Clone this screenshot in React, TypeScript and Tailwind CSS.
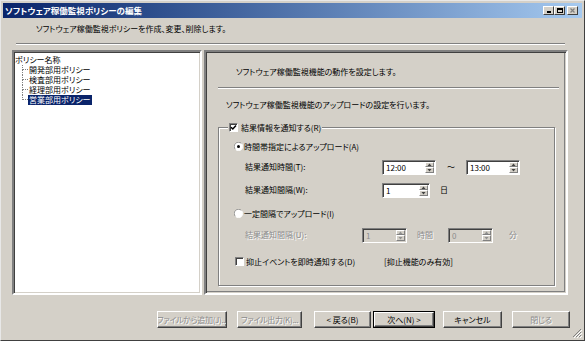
import React from 'react';

const Check = ({ checked }: { checked?: boolean }) => (
  <span className="inline-flex w-[9px] h-[9px] shrink-0 items-center justify-center bg-white border border-t-[#808080] border-l-[#808080] border-b-white border-r-white shadow-[inset_1px_1px_0_#404040]">
    {checked && (
      <svg width="7" height="7" viewBox="0 0 7 7">
        <path d="M1 3.2 L2.8 5 L6 1.4" stroke="#000" strokeWidth="1.5" fill="none" />
      </svg>
    )}
  </span>
);

const Radio = ({ checked }: { checked?: boolean }) => (
  <svg width="9" height="9" viewBox="0 0 12 12" className="shrink-0">
    <circle cx="6" cy="6" r="5.5" fill="#fff" />
    <path d="M10 2 A5.5 5.5 0 0 0 2 10" stroke="#808080" strokeWidth="1" fill="none" />
    <path d="M2 10 A5.5 5.5 0 0 0 10 2" stroke="#fff" strokeWidth="1" fill="none" />
    {checked && <circle cx="6" cy="6" r="2" fill="#000" />}
  </svg>
);

const Arrow = ({ up, disabled }: { up?: boolean; disabled?: boolean }) => (
  <div className="flex-1 flex items-center justify-center bg-[#d4d0c8] border-t border-l border-t-white border-l-white border-b border-r border-b-[#808080] border-r-[#808080]">
    <svg width="5" height="3" viewBox="0 0 5 3">
      <path d={up ? 'M0.5 3 L2.5 0.5 L4.5 3 Z' : 'M0.5 0 L4.5 0 L2.5 2.5 Z'} fill={disabled ? '#909090' : '#404040'} />
    </svg>
  </div>
);

const Spin = ({ value, className, disabled }: { value: string; className: string; disabled?: boolean }) => (
  <div
    className={`flex h-[15px] border border-t-[#808080] border-l-[#808080] border-b-white border-r-white shadow-[inset_1px_1px_0_#404040] ${
      disabled ? 'bg-[#d4d0c8] text-[#8c8c8c]' : 'bg-white text-black'
    } ${className}`}
  >
    <div className="flex-1 pl-[3px] pt-[2px] leading-[10px]">{value}</div>
    <div className="flex flex-col w-[10px] py-[1px] pr-[1px]">
      <Arrow up disabled={disabled} />
      <Arrow disabled={disabled} />
    </div>
  </div>
);

const Btn = ({ label, className, disabled, primary }: { label: string; className: string; disabled?: boolean; primary?: boolean }) => (
  <div className={`h-[17px] ${primary ? 'border border-black' : ''} ${className}`}>
    <div className="h-full flex items-center justify-center overflow-hidden border border-t-white border-l-white border-b-[#404040] border-r-[#404040] shadow-[inset_-1px_-1px_0_#808080]">
      <span className={`whitespace-nowrap ${disabled ? 'text-[#8c8c8c] [text-shadow:1px_1px_0_#fff] tracking-[-0.3px]' : 'text-black'}`}>{label}</span>
    </div>
  </div>
);

const TreeRow = ({ label, last, selected }: { label: string; last?: boolean; selected?: boolean }) => (
  <div className="flex h-[10px]">
    <div className="w-[6px] flex flex-col">
      <div className="h-[5px] border-l border-b border-dotted border-[#808080]" />
      <div className={`flex-1 ${last ? '' : 'border-l border-dotted border-[#808080]'}`} />
    </div>
    <span className={`px-[1px] leading-[10px] ${selected ? 'bg-[#0a246a] text-white' : ''}`}>{label}</span>
  </div>
);

export default function App() {
  const dis = 'text-[#8c8c8c] [text-shadow:1px_1px_0_#fff]';
  return (
    <div className="w-[585px] h-[341px] bg-[#d4d0c8] flex flex-col p-[2px] border border-t-[#e8e8e8] border-l-[#e8e8e8] border-b-[#404040] border-r-[#404040] font-['Noto_Sans_CJK_JP',sans-serif] [font-feature-settings:'palt'] text-[8px] leading-[10px] text-black overflow-hidden">
      {/* title bar */}
      <div className="h-[15px] flex items-center bg-gradient-to-r from-[#0a246a] to-[#a6caf0] pl-[2px] pr-[4px]">
        <span className="text-white font-bold text-[8.5px]">ソフトウェア稼働監視ポリシーの編集</span>
        <div className="ml-auto flex items-center">
          <div className="w-[11px] h-[9px] flex items-end justify-center pb-[1px] bg-[#d4d0c8] border border-t-white border-l-white border-b-[#404040] border-r-[#404040]">
            <div className="w-[4px] h-[2px] bg-black" />
          </div>
          <div className="w-[11px] h-[9px] flex items-center justify-center bg-[#d4d0c8] border border-t-white border-l-white border-b-[#404040] border-r-[#404040]">
            <div className="w-[6px] h-[5px] border border-black border-t-2" />
          </div>
          <div className="w-[11px] h-[9px] ml-[2px] flex items-center justify-center bg-[#d4d0c8] border border-t-white border-l-white border-b-[#404040] border-r-[#404040]">
            <svg width="5" height="5" viewBox="0 0 5 5">
              <path d="M0.5 0.5 L4.5 4.5 M4.5 0.5 L0.5 4.5" stroke="#808080" strokeWidth="1.2" />
            </svg>
          </div>
        </div>
      </div>

      {/* header */}
      <div className="mt-[6px] pl-[33px] h-[10px]">ソフトウェア稼働監視ポリシーを作成、変更、削除します。</div>
      <div className="mt-[9px] ml-[13px] w-[549px] border-t border-t-[#808080] border-b border-b-white" />

      {/* main */}
      <div className="mt-[5px] pl-[9px] flex gap-[2px] h-[247px]">
        <div className="w-[190px] bg-white border-2 border-t-[#808080] border-l-[#808080] border-b-white border-r-white shadow-[inset_1px_1px_0_#404040,inset_-1px_-1px_0_#d4d0c8] pt-[3px] pl-[1px]">
          <div className="h-[10px] leading-[10px]">ポリシー名称</div>
          <div className="pl-[7px]">
            <TreeRow label="開発部用ポリシー" />
            <TreeRow label="検査部用ポリシー" />
            <TreeRow label="経理部用ポリシー" />
            <TreeRow label="営業部用ポリシー" last selected />
          </div>
        </div>

        <div className="w-[364px] border-2 border-t-[#808080] border-l-[#808080] border-b-white border-r-white shadow-[inset_1px_1px_0_#404040,inset_-1px_-1px_0_#d4d0c8] p-[1px]">
          <div className="h-full flex flex-col border-b border-r border-b-[#808080] border-r-[#808080]">
            <div className="pt-[14px] pl-[29px] h-[24px]">ソフトウェア稼働監視機能の動作を設定します。</div>
            <div className="mt-[10px] ml-[11px] mr-[5px] border-t border-t-[#808080] border-b border-b-white" />
            <div className="mt-[11px] pl-[19px] h-[10px]">ソフトウェア稼働監視機能のアップロードの設定を行います。</div>

            <fieldset className="mt-[13px] ml-[11px] mr-[9px] border border-[#808080] shadow-[inset_1px_1px_0_#fff,1px_1px_0_#fff] px-0 pb-[18px]">
              <legend className="ml-[9px] px-[1px] bg-[#d4d0c8] flex items-center gap-[3px] h-[10px]">
                <Check checked />
                <span>結果情報を通知する(R)</span>
              </legend>

              <div className="mt-[9px] pl-[15px] flex items-center gap-[1px] h-[10px]">
                <Radio checked />
                <span>時間帯指定によるアップロード(A)</span>
              </div>

              <div className="mt-[8px] pl-[26px] flex items-center h-[15px]">
                <span className="w-[137px]">結果通知時間(T):</span>
                <Spin value="12:00" className="w-[54px]" />
                <span className="w-[30px] text-center">～</span>
                <Spin value="13:00" className="w-[54px]" />
              </div>

              <div className="mt-[8px] pl-[26px] flex items-center h-[15px]">
                <span className="w-[137px]">結果通知間隔(W):</span>
                <Spin value="1" className="w-[48px]" />
                <span className="ml-[10px]">日</span>
              </div>

              <div className="mt-[11px] pl-[15px] flex items-center gap-[1px] h-[10px]">
                <Radio />
                <span>一定間隔でアップロード(I)</span>
              </div>

              <div className="mt-[9px] pl-[26px] flex items-center h-[15px]">
                <span className={`w-[117px] ${dis}`}>結果通知間隔(U):</span>
                <Spin value="1" className="w-[45px]" disabled />
                <span className={`ml-[10px] w-[31px] ${dis}`}>時間</span>
                <Spin value="0" className="w-[45px]" disabled />
                <span className={`ml-[16px] ${dis}`}>分</span>
              </div>

              <div className="mt-[14px] pl-[16px] flex items-center h-[10px]">
                <Check />
                <span className="ml-[2px] w-[138px]">抑止イベントを即時通知する(D)</span>
                <span>[抑止機能のみ有効]</span>
              </div>
            </fieldset>
          </div>
        </div>
      </div>

      {/* buttons */}
      <div className="mt-[16px] flex items-center justify-end pr-[12px]">
        <Btn label="ファイルから追加(J)..." className="w-[70px]" disabled />
        <Btn label="ファイル出力(K)..." className="w-[65px] ml-[10px]" disabled />
        <Btn label="< 戻る(B)" className="w-[57px] ml-[12px]" />
        <Btn label="次へ(N) >" className="w-[62px] ml-[2px]" primary />
        <Btn label="キャンセル" className="w-[59px] ml-[8px]" />
        <Btn label="閉じる" className="w-[58px] ml-[10px]" disabled />
      </div>

      <div className="mt-auto flex justify-end">
        <svg width="10" height="10" viewBox="0 0 10 10">
          <path d="M9 1 L1 9 M9 4 L4 9 M9 7 L7 9" stroke="#808080" strokeWidth="1" />
          <path d="M10 2 L2 10 M10 5 L5 10 M10 8 L8 10" stroke="#fff" strokeWidth="1" />
        </svg>
      </div>
    </div>
  );
}
